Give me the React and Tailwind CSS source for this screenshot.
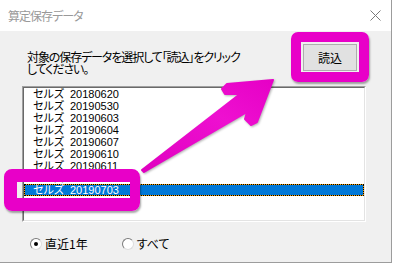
import React from 'react'

const jp = "font-['Noto_Sans_CJK_JP',sans-serif] [font-feature-settings:'palt']"
const listFont = "font-['Liberation_Sans','Noto_Sans_CJK_JP',sans-serif] [word-spacing:3px]"

const items = [
  'セルズ 20180620',
  'セルズ 20190530',
  'セルズ 20190603',
  'セルズ 20190604',
  'セルズ 20190607',
  'セルズ 20190610',
  'セルズ 20190611',
  'セルズ 20190701',
  'セルズ 20190703',
]
const selected = 8

const Radio = ({ checked, label }) => (
  <div className="flex items-center gap-[3px]">
    <span className="w-[12px] h-[12px] rounded-full border border-t-[#7a7a7a] border-l-[#7a7a7a] border-r-[#dcdcdc] border-b-[#dcdcdc] bg-white flex items-center justify-center">
      {checked && <span className="w-[4px] h-[4px] rounded-full bg-black" />}
    </span>
    <span className="text-[12px] leading-[12px] text-black">{label}</span>
  </div>
)

export default function App() {
  return (
    <div className={`relative w-[393px] h-[266px] bg-white overflow-hidden ${jp}`}>
      <div className="w-[392px] h-[263px] border-r border-b border-[#9c9c9c] flex flex-col bg-[#f0f0f0]">
        {/* title bar */}
        <div className="h-[31px] bg-white flex items-center justify-between pl-[8px] pr-[9px]">
          <span className="text-[12px] tracking-[-1px] text-[#999999]">算定保存データ</span>
          <svg width="11" height="11" viewBox="0 0 11 11" className="mr-[1px]">
            <path d="M0.5 0.5 L10.5 10.5 M10.5 0.5 L0.5 10.5" stroke="#7a7a7a" strokeWidth="1" />
          </svg>
        </div>

        {/* body */}
        <div className="flex-1 flex flex-col pl-[22px] pr-[25px]">
          <div className="h-[55px] flex justify-between items-start">
            <p className="ml-[5px] mt-[20px] text-[12px] leading-[12px] tracking-[-1.1px] text-black">
              対象の保存データを選択して「読込」をクリック<br />してください。
            </p>
            <button className="mt-[13px] mr-[9px] w-[54px] h-[27px] border border-[#adadad] bg-[#e1e1e1] text-[12px] text-black">
              読込
            </button>
          </div>

          <div className="h-[136px] border-t border-l border-[#a0a0a0] border-r border-b border-r-white border-b-white">
            <div className={`h-full border-t border-l border-[#696969] border-r border-b border-r-[#e3e3e3] border-b-[#e3e3e3] bg-white ${listFont}`}>
              {items.map((t, i) =>
                i === selected ? (
                  <div key={t} className="h-[12px] bg-[#f7a100] border border-dotted border-black">
                    <div className="h-full bg-[#0078d7] pl-[8px] text-[11px] leading-[10px] text-white">{t}</div>
                  </div>
                ) : (
                  <div key={t} className="h-[12px] pl-[9px] text-[11px] leading-[12px] text-black">{t}</div>
                )
              )}
            </div>
          </div>

          <div className="mt-[15px] h-[13px] flex items-center gap-[34px] pl-[8px]">
            <Radio checked label="直近1年" />
            <Radio label="すべて" />
          </div>
        </div>
      </div>

      {/* annotations */}
      <div className="absolute left-[291px] top-[32px] w-[78px] h-[50px] border-[10px] border-[#e800c8] rounded-[7px] shadow-[1px_2px_2px_rgba(0,0,0,0.35)]" />
      <div className="absolute left-[4px] top-[169px] w-[136px] h-[42px] border-[13px] border-r-[10px] border-[#e800c8] rounded-[8px] shadow-[1px_2px_2px_rgba(0,0,0,0.35)]" />
      <svg className="absolute inset-0 pointer-events-none" width="393" height="266" viewBox="0 0 393 266">
        <defs>
          <linearGradient id="ag" x1="0" y1="1" x2="1" y2="0">
            <stop offset="0" stopColor="#e000c0" />
            <stop offset="0.6" stopColor="#ee10d0" />
            <stop offset="1" stopColor="#e600c6" />
          </linearGradient>
        </defs>
        <polygon
          points="273,80 227,84 222,89 225,94 240,94 142,170 144,172 247,112 245,119 251,125 257,122"
          fill="url(#ag)"
          stroke="url(#ag)"
          strokeWidth="2"
          strokeLinejoin="round"
          style={{ filter: 'drop-shadow(1px 1px 1px rgba(0,0,0,0.3))' }}
        />
      </svg>
    </div>
  )
}
